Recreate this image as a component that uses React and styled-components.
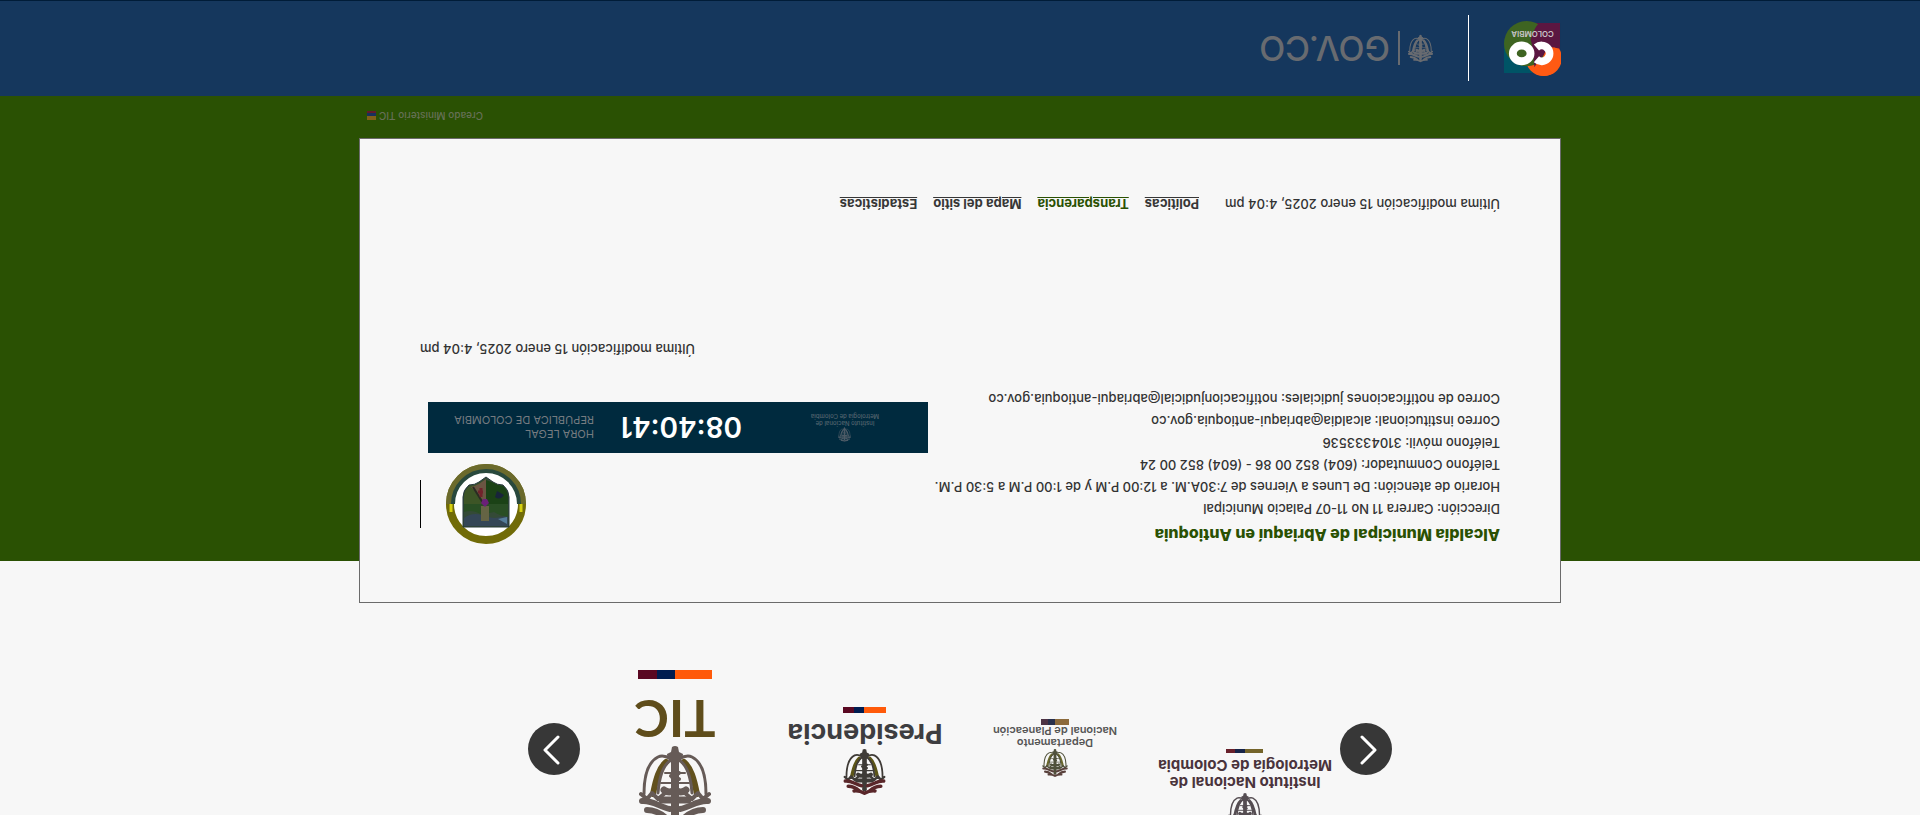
import React from "react";
import styled, { createGlobalStyle } from "styled-components";

const GlobalStyle = createGlobalStyle`
  * { box-sizing: border-box; }
  body { margin: 0; background: #f7f7f7; }
`;

/* The whole page is shown upside down */
const Page = styled.div`
  min-height: 100vh;
  display: flex;
  flex-direction: column;
  transform: rotate(180deg);
  background: #f7f7f7;
  color: #333;
  font: 500 13px/22px Inter, "Liberation Sans", sans-serif;
`;

const Partners = styled.section`
  display: flex;
  justify-content: center;
  align-items: flex-start;
  height: 254px;
`;

const ArrowButton = styled.button`
  width: 52px;
  height: 52px;
  margin: 40px 0 0;
  padding: 0;
  border: 0;
  border-radius: 50%;
  background: #373737;
  display: grid;
  place-items: center;
  cursor: pointer;
`;

const Slides = styled.ul`
  display: grid;
  grid-template-columns: repeat(4, 190px);
  margin: 0;
  padding: 0;
  list-style: none;
`;

const Slide = styled.li`
  display: flex;
  flex-direction: column;
  align-items: center;
  padding-top: ${(p) => p.$top}px;
  color: ${(p) => p.$color};
`;

const PartnerName = styled.div`
  font-family: ${(p) => p.$family || "Inter"}, sans-serif;
  font-size: ${(p) => p.$size}px;
  line-height: ${(p) => p.$line}px;
  font-weight: ${(p) => p.$weight};
  text-align: center;
  white-space: nowrap;
  margin-top: ${(p) => p.$gap}px;
`;

const Stripe = styled.div`
  width: ${(p) => p.$width}px;
  height: ${(p) => p.$height}px;
  margin-top: ${(p) => p.$gap}px;
  background: linear-gradient(
    to right,
    ${(p) => p.$first} 50%,
    ${(p) => p.$second} 50% 75%,
    ${(p) => p.$third} 75%
  );
`;

const Green = styled.section`
  flex: 1;
  padding-bottom: 9px;
  background: #2a5103;
`;

const Container = styled.div`
  width: 100%;
  max-width: 1202px;
  margin: 0 auto;
`;

const Card = styled.div`
  margin-top: -42px;
  padding: 54px 60px;
  border: 1px solid #6b6b6b;
  background: #f7f7f7;
`;

const CardTop = styled.div`
  display: grid;
  grid-template-columns: minmax(0, 1fr) 508px;
`;

const Title = styled.h2`
  margin: 0 0 2px;
  font-size: 16px;
  line-height: 26px;
  font-weight: 800;
  color: #2a5103;
`;

const Line = styled.p`
  margin: 0;
  white-space: nowrap;
`;

const Side = styled.div`
  display: flex;
  flex-direction: column;
  padding-top: 3px;
`;

const SealRow = styled.div`
  display: flex;
  justify-content: flex-end;
  align-items: center;
  gap: 24px;
`;

const Rule = styled.span`
  width: 1px;
  height: ${(p) => p.$height}px;
  background: ${(p) => p.$color};
`;

const Clock = styled.div`
  display: grid;
  grid-template-columns: 166px 128px 1fr;
  column-gap: 20px;
  align-items: center;
  height: 51px;
  margin: 11px 8px 42px 0;
  background: #002a3e;
  color: #757b80;
`;

const ClockOwner = styled.div`
  display: flex;
  flex-direction: column;
  align-items: center;
  font-size: 6px;
  line-height: 7px;
  text-align: center;
  color: #53646e;
`;

const Time = styled.time`
  color: #fff;
  font-size: 28px;
  line-height: 32px;
  font-weight: 600;
`;

const ClockLabel = styled.div`
  font-size: 11px;
  line-height: 14px;
  font-weight: 400;
  white-space: nowrap;
`;

const Updated = styled.p`
  margin: 0;
  text-align: right;
`;

const CardBottom = styled.nav`
  display: flex;
  gap: 16px;
  margin-top: 123px;
`;

const UpdatedInline = styled.span`
  margin-right: 10px;
`;

const NavLink = styled.a`
  font-weight: 700;
  color: ${(p) => (p.$active ? "#2a5103" : "#373737")};
  text-decoration: underline;
`;

const Credit = styled.div`
  display: flex;
  justify-content: flex-end;
  align-items: center;
  gap: 3px;
  margin-top: 11px;
  padding-right: 8px;
  font-size: 10px;
  color: #667057;
`;

const Footer = styled.footer`
  background: #15375d;
  border-bottom: 1px solid #001c38;
`;

const FooterInner = styled(Container)`
  display: flex;
  align-items: center;
  height: 95px;
`;

const Divider = styled(Rule)`
  margin: 0 35px;
`;

const GovLink = styled.a`
  display: flex;
  align-items: center;
  gap: 8px;
  color: #686b70;
  font-size: 34px;
  line-height: 40px;
  text-decoration: none;
`;

const GovRule = styled.span`
  width: 2px;
  height: 34px;
  background: currentColor;
`;

function Emblem({ width, height, box = "0 -10 72 79", color = "currentColor", accent, wing }) {
  const second = accent || color;
  const top = wing || color;
  return (
    <svg width={width} height={height} viewBox={box} aria-hidden="true">
      <g fill="none" stroke={color} strokeLinecap="round" strokeLinejoin="round">
        <path d="M32 56C27 59 23 60 19 58 9 53 5 38 5 21M40 56C45 59 49 60 53 58 63 53 67 38 67 21" strokeWidth="3" />
        <path d="M27 53C20 47 17 36 14 21M45 53C52 47 55 36 58 21" stroke={second} strokeWidth="6" />
        <path d="M32 55C24 50 20 36 19 22M40 55C48 50 52 36 53 22" strokeWidth="3" />
        <path d="M26 42h20M22 32h28" strokeWidth="2" />
        <path d="M25 25q5-4 11 0 6-4 11 0M23 15h26" strokeWidth="7" />
        <path d="M36 58V0" strokeWidth="8" />
        <path d="M32 42l7-4M32 36l8 3" strokeWidth="4" />
        <path d="M2 21l6-5 5 6 6-6 6 5M70 21l-6-5-5 6-6-6-6 5" strokeWidth="4" />
        <path d="M3 14C14 15 20 8 31 6M69 14C58 15 52 8 41 6" stroke={top} strokeWidth="6" />
        <path d="M8 5Q18 5 27-3M64 5Q54 5 45-3M18-3Q27-2 36-7 45-2 54-3" stroke={top} strokeWidth="6" />
      </g>
      <path d="M36 51c4 0 8 5 8 10l-4 2-1 5q-3 2-6 0l-1-5-4-2c0-5 4-10 8-10z" fill={color} />
    </svg>
  );
}

function Seal() {
  return (
    <svg width="81" height="81" viewBox="0 0 81 81" role="img" aria-label="Escudo de Abriaquí">
      <circle cx="40" cy="41" r="36" fill="#fff" stroke="#716b08" strokeWidth="8" />
      <path d="M4 41a36 36 0 0 0 72 0" fill="none" stroke="#6b6a2c" strokeWidth="8" />
      <path d="M7 41a33 33 0 0 0 66 0" fill="none" stroke="#29493d" strokeWidth="4" />
      <path d="M5 33v8M75 33v8" stroke="#d6d010" strokeWidth="3" />
      <path d="M17 18h46v30q0 7-6 12-6 0-10 3l-7 5-7-5q-4-3-10-3-6-5-6-12z" fill="#344a37" stroke="#27383c" />
      <path d="M18 19h44v8q-8 6-18 3-12-6-26 0z" fill="#344656" />
      <path d="M18 28q8 1 14 5 6-1 12-3 9 6 18 3v8H18z" fill="#294e24" />
      <path d="M18 41h22v24l-8-3q-4-3-9-3-5-5-5-11z" fill="#1b4216" />
      <path d="M40 41h22v7q0 7-6 11-5 0-9 3l-7 4z" fill="#3d5526" />
      <path d="M40 41v25l7-5q4-2 8-3z" fill="#6b5542" />
      <path d="M43 42l10 16" stroke="#2a2c22" strokeWidth="2" />
      <path d="M37 24h8v15h-8z" fill="#656444" />
      <path d="M37 42l4-4 4 4-2 4h-4z" fill="#6b2078" />
      <path d="M22 50q4-6 9-2l-2 6z" fill="#18243b" />
      <path d="M19 21l9 5-9 2z" fill="#557c9a" />
      <path d="M45 48v9M48 53h-5" stroke="#71232b" strokeWidth="3" />
    </svg>
  );
}

function ColombiaLogo() {
  return (
    <svg width="57" height="57" viewBox="0 0 58 58" role="img" aria-label="CO Colombia">
      <path d="M29 4h29v34H29z" fill="#005466" />
      <path d="M1 26h38v29H1z" fill="#5b1741" />
      <circle cx="18" cy="19" r="18" fill="#ff5a13" />
      <circle cx="35" cy="34" r="23" fill="#3e6421" />
      <path d="M7 30q14-8 20-20 2 24 4 28-4 13-9 17H1V27z" fill="#5b1741" />
      <path d="M2 29a18 18 0 0 1 23-26q-5 16-12 28z" fill="#ff5a13" />
      <g fill="none" stroke="#fff" strokeWidth="8">
        <path d="M25 18A8 8 0 1 0 25 30" />
        <ellipse cx="40" cy="24" rx="9" ry="8" />
      </g>
      <text x="29" y="47" textAnchor="middle" fill="#c9c3c8" fontFamily="Inter, sans-serif" fontWeight="600" fontSize="8">COLOMBIA</text>
    </svg>
  );
}

function Chevron({ d }) {
  return (
    <svg width="52" height="52" viewBox="0 0 52 52" aria-hidden="true">
      <path d={d} fill="none" stroke="#fff" strokeWidth="3" strokeLinecap="round" strokeLinejoin="round" />
    </svg>
  );
}

const contact = [
  "Dirección: Carrera 11 No 11-07 Palacio Municipal",
  "Horario de atención: De Lunes a Viernes de 7:30A.M. a 12:00 P.M y de 1:00 P.M a 5:30 P.M.",
  "Teléfono Conmutador: (604) 852 00 86 - (604) 852 00 24",
  "Teléfono móvil: 3104333536",
  "Correo institucional: alcaldia@abriaqui-antioquia.gov.co",
  "Correo de notificaciones judiciales: notificacionjudicial@abriaqui-antioquia.gov.co",
];

const links = ["Políticas", "Transparencia", "Mapa del sitio", "Estadísticas"];
const updated = "Última modificación 15 enero 2025, 4:04 pm";

export default function App() {
  return (
    <Page>
      <GlobalStyle />
      <Partners aria-label="Entidades">
        <ArrowButton aria-label="Anterior">
          <Chevron d="M30 12L17 25l13 13" />
        </ArrowButton>
        <Slides>
          <Slide $top={0} $color="#4a343c">
            <Emblem width={34} height={22} box="0 22 72 47" color="#554d52" />
            <PartnerName $size={15} $line={17} $weight={700} $gap={2}>
              Instituto Nacional de
              <br />
              Metrología de Colombia
            </PartnerName>
            <Stripe $width={37} $height={4} $gap={4} $first="#74642a" $second="#172448" $third="#68202b" />
          </Slide>
          <Slide $top={38} $color="#555">
            <Emblem width={28} height={28} color="#50513c" accent="#6a682b" wing="#59413c" />
            <PartnerName $size={11} $line={12} $weight={600} $gap={0}>
              Departamento
              <br />
              Nacional de Planeación
            </PartnerName>
            <Stripe $width={28} $height={6} $gap={0} $first="#8c6a3b" $second="#29304c" $third="#4d3344" />
          </Slide>
          <Slide $top={20} $color="#3d3d40">
            <Emblem width={43} height={46} color="#3f3b37" accent="#5c5517" wing="#5a272a" />
            <PartnerName $size={27} $line={32} $weight={700} $gap={0}>
              Presidencia
            </PartnerName>
            <Stripe $width={43} $height={6} $gap={4} $first="#ff5a0a" $second="#001c50" $third="#5a0822" />
          </Slide>
          <Slide $top={0} $color="#5f4d1b">
            <Emblem width={72} height={69} box="0 0 72 69" color="#665b57" accent="#62511d" />
            <PartnerName $family="Lato" $size={52} $line={52} $weight={700} $gap={0}>
              TIC
            </PartnerName>
            <Stripe $width={74} $height={9} $gap={15} $first="#ff5a0a" $second="#001c50" $third="#5a0822" />
          </Slide>
        </Slides>
        <ArrowButton aria-label="Siguiente">
          <Chevron d="M22 12l13 13-13 13" />
        </ArrowButton>
      </Partners>

      <Green>
        <Container>
          <Card>
            <CardTop>
              <div>
                <Title>Alcaldía Municipal de Abriaquí en Antioquia</Title>
                {contact.map((text) => (
                  <Line key={text}>{text}</Line>
                ))}
              </div>
              <Side>
                <SealRow>
                  <Seal />
                  <Rule $height={48} $color="#000" />
                </SealRow>
                <Clock>
                  <ClockOwner>
                    <Emblem width={13} height={15} color="#4d5b66" />
                    <span>
                      Instituto Nacional de
                      <br />
                      Metrología de Colombia
                    </span>
                  </ClockOwner>
                  <Time>08:40:41</Time>
                  <ClockLabel>
                    HORA LEGAL
                    <br />
                    REPÚBLICA DE COLOMBIA
                  </ClockLabel>
                </Clock>
                <Updated>{updated}</Updated>
              </Side>
            </CardTop>
            <CardBottom>
              <UpdatedInline>{updated}</UpdatedInline>
              {links.map((name) => (
                <NavLink key={name} href="#" $active={name === "Transparencia"}>
                  {name}
                </NavLink>
              ))}
            </CardBottom>
          </Card>
          <Credit>
            <span>Creado Ministerio TIC</span>
            <svg width="9" height="9" viewBox="0 0 9 9" aria-hidden="true">
              <path d="M0 0h9v4H0z" fill="#806018" />
              <path d="M0 4h9v3H0z" fill="#18305c" />
              <path d="M0 7h9v2H0z" fill="#641b28" />
            </svg>
          </Credit>
        </Container>
      </Green>

      <Footer>
        <FooterInner>
          <ColombiaLogo />
          <Divider $height={66} $color="#fff" />
          <GovLink href="#">
            <Emblem width={25} height={31} />
            <GovRule />
            <span>GOV.CO</span>
          </GovLink>
        </FooterInner>
      </Footer>
    </Page>
  );
}
